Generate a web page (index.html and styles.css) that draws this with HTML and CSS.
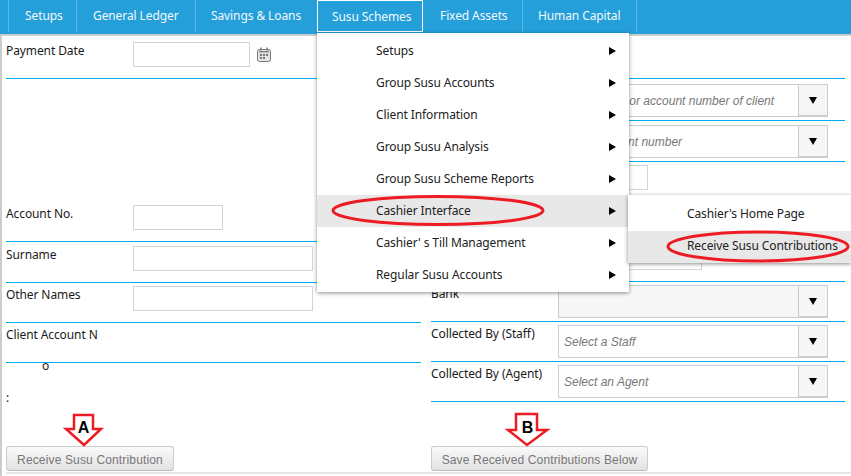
FILE: index.html
```html
<!DOCTYPE html>
<html lang="en">
<head>
    <meta charset="UTF-8">
    <meta name="viewport" content="width=device-width, initial-scale=1.0">
    <title>Receive Susu Contributions</title>
    <link rel="stylesheet" href="styles.css">
</head>
<body>

    <nav class="topnav">
        <a class="tab tab-setups">Setups</a>
        <a class="tab tab-ledger">General Ledger</a>
        <a class="tab tab-savings">Savings &amp; Loans</a>
        <a class="tab active">Susu Schemes</a>
        <a class="tab tab-assets">Fixed Assets</a>
        <a class="tab tab-capital">Human Capital</a>
    </nav>

    <main class="form-area">
        <div class="cols">
            <section class="col col-left">
                <div class="row row-date">
                    <label>Payment Date</label>
                    <input type="text" class="field w-date">
                    <svg class="cal-icon" width="14" height="15" viewBox="0 0 14 15">
                        <rect x="0.5" y="2.5" width="13" height="12" rx="2" fill="#e4e4e4" stroke="#777"/>
                        <rect x="3" y="0.5" width="1.5" height="3" fill="#777"/>
                        <rect x="9.5" y="0.5" width="1.5" height="3" fill="#777"/>
                        <rect x="2" y="4" width="10" height="1.5" fill="#888"/>
                        <path d="M3 7h2v2H3zM6 7h2v2H6zM9 7h2v2H9zM3 10h2v2H3zM6 10h2v2H6z" fill="#777"/>
                    </svg>
                </div>
                <div class="row-blank"></div>
                <div class="row row-account">
                    <label>Account No.</label>
                    <input type="text" class="field w-account">
                </div>
                <div class="row row-surname">
                    <label>Surname</label>
                    <input type="text" class="field w-name">
                </div>
                <div class="row">
                    <label>Other Names</label>
                    <input type="text" class="field w-name">
                </div>
                <div class="row">
                    <label>Client Account N</label>
                </div>
                <div class="wrapped-o">o</div>
                <div class="wrapped-colon">:</div>
                <button class="save-btn btn-a">Receive Susu Contribution</button>
            </section>

            <section class="col col-right">
                <div class="row row-top"></div>
                <div class="row row-r1">
                    <label></label>
                    <div class="combo"><span class="combo-text">Enter name or account number of client</span><span class="combo-btn"></span></div>
                </div>
                <div class="row row-r2">
                    <label></label>
                    <div class="combo"><span class="combo-text">Enter account number</span><span class="combo-btn"></span></div>
                </div>
                <div class="row">
                    <label></label>
                    <input type="text" class="field w-account">
                </div>
                <div class="row"></div>
                <div class="row">
                    <label></label>
                    <input type="text" class="field w-wide">
                </div>
                <div class="row">
                    <label>Bank</label>
                    <div class="combo combo-grey"><span class="combo-text"></span><span class="combo-btn"></span></div>
                </div>
                <div class="row">
                    <label>Collected By (Staff)</label>
                    <div class="combo"><span class="combo-text">Select a Staff</span><span class="combo-btn"></span></div>
                </div>
                <div class="row">
                    <label>Collected By (Agent)</label>
                    <div class="combo"><span class="combo-text">Select an Agent</span><span class="combo-btn"></span></div>
                </div>
                <button class="save-btn btn-b">Save Received Contributions Below</button>
            </section>
        </div>
    </main>

    <ul class="menu">
        <li>Setups</li>
        <li>Group Susu Accounts</li>
        <li>Client Information</li>
        <li>Group Susu Analysis</li>
        <li>Group Susu Scheme Reports</li>
        <li class="hover">Cashier Interface</li>
        <li>Cashier' s Till Management</li>
        <li>Regular Susu Accounts</li>
    </ul>

    <ul class="submenu">
        <li>Cashier's Home Page</li>
        <li class="hover">Receive Susu Contributions</li>
    </ul>

    <!-- red annotations drawn over the screenshot -->
    <svg class="marks" width="851" height="476" viewBox="0 0 851 476">
        <ellipse cx="438" cy="210.5" rx="105" ry="14" fill="none" stroke="#ed1c24" stroke-width="3"/>
        <ellipse cx="758" cy="246.5" rx="90" ry="14.5" fill="none" stroke="#ed1c24" stroke-width="3"/>
        <polygon points="74,415 93,415 93,429 101,429 84,445 66,429 74,429" fill="#fff" stroke="#ed1c24" stroke-width="2.5"/>
        <polygon points="516,414 537,414 537,430 547,430 527,445 508,430 516,430" fill="#fff" stroke="#ed1c24" stroke-width="2.5"/>
        <text class="mark-letter" x="83.5" y="433" text-anchor="middle">A</text>
        <text class="mark-letter" x="527.5" y="433" text-anchor="middle">B</text>
    </svg>

</body>
</html>
```
FILE: styles.css
```css
body {
    margin: 0;
    height: 476px;
    overflow: hidden;
    background-color: #fff;
    font-family: "Noto Sans", "Open Sans", sans-serif;
    font-size: 12px;
    letter-spacing: -0.1px;
    color: #1a1a1a;
}
.topnav {
    display: flex;
    height: 34px;
    padding-left: 8px;
    background-color: #259fda;
    border-bottom: 2px solid #ccc;
}
.tab {
    display: block;
    box-sizing: border-box;
    height: 32px;
    line-height: 31px;
    padding-left: 16px;
    white-space: nowrap;
    color: #f2f8fc;
    border-left: 1px solid #5cb8e4;
}
.tab-setups { width: 68px; }
.tab-ledger { width: 119px; }
.tab-savings { width: 122px; padding-left: 15px; }
.tab-assets { width: 99px; padding-left: 17px; border-left: 0; }
.tab-capital { width: 115px; padding-left: 15px; border-right: 1px solid #5cb8e4; }
.tab.active {
    width: 106px;
    padding-left: 14px;
    border: 1px solid #fff;
}
.form-area {
    height: 440px;
    border-left: 2px solid #ccc;
    padding-left: 4px;
}
.cols {
    display: flex;
    box-sizing: border-box;
    height: 438px;
    border-bottom: 2px solid #e6e6e6;
}
.col {
    display: flex;
    flex-direction: column;
}
.col-left {
    width: 415px;
    margin-right: 10px;
}
.col-right {
    width: 414px;
}
.row {
    display: flex;
    flex-shrink: 0;
    align-items: flex-start;
    box-sizing: border-box;
    height: 40px;
    padding-top: 3px;
    border-bottom: 1px solid #00aeef;
}
.row label {
    width: 127px;
    flex-shrink: 0;
    line-height: 18px;
}
.row-date {
    height: 43px;
    padding-top: 6px;
}
.row-blank {
    flex-shrink: 0;
    height: 122px;
}
.row-account {
    height: 41px;
    padding-top: 4px;
}
.row-surname {
    height: 41px;
    padding-top: 4px;
}
.field {
    box-sizing: border-box;
    height: 25px;
    margin: 0;
    padding: 0 4px;
    border: 1px solid #d4d4d4;
    background-color: #fff;
}
.w-date { width: 117px; }
.w-account { width: 90px; }
.w-name { width: 180px; }
.w-wide { width: 144px; }
.cal-icon {
    margin: 5px 0 0 7px;
}
.wrapped-o {
    padding-left: 36px;
    line-height: 16px;
    margin-top: -5px;
}
.wrapped-colon {
    line-height: 16px;
    margin-top: 16px;
}
.save-btn {
    flex-shrink: 0;
    box-sizing: border-box;
    height: 25px;
    padding: 2px 6px 0;
    border: 1px solid #ccc;
    border-bottom-color: #bbb;
    border-radius: 3px;
    background: linear-gradient(#fafafa, #e2e2e2);
    color: #777;
    font-family: "Liberation Sans", Arial, sans-serif;
    font-size: 12px;
    letter-spacing: 0.15px;
    white-space: nowrap;
    align-self: flex-start;
}
.btn-a {
    width: 168px;
    margin-top: 40px;
}
.btn-b {
    width: 217px;
    margin-top: 44px;
}
.row-top { height: 43px; }
.row-r1 { height: 42px; padding-top: 5px; }
.row-r2 { height: 41px; padding-top: 4px; }
.combo {
    display: flex;
    box-sizing: border-box;
    width: 270px;
    height: 33px;
    border: 1px solid #ccc;
    background-color: #fff;
}
.combo-grey {
    background-color: #f6f6f6;
}
.combo-text {
    flex: 1;
    padding-left: 5px;
    line-height: 33px;
    letter-spacing: 0;
    color: #777;
    font-family: "Liberation Sans", Arial, sans-serif;
    font-style: italic;
}
.combo-btn {
    position: relative;
    box-sizing: border-box;
    width: 29px;
    border-left: 1px solid #ccc;
    border-bottom: 1px solid #ccc;
    background-color: #f6f6f6;
}
.combo-btn::after {
    content: "";
    position: absolute;
    left: 10px;
    top: 12px;
    border-style: solid;
    border-width: 7px 4px 0;
    border-color: #000 transparent transparent;
}
.menu, .submenu {
    position: absolute;
    margin: 0;
    list-style: none;
    background-color: #fff;
    box-shadow: 0 1px 4px rgba(0, 0, 0, 0.45);
    color: #222;
}
.menu {
    left: 317px;
    top: 33px;
    width: 312px;
    height: 259px;
    padding: 2px 0 0;
    box-sizing: border-box;
}
.menu li {
    position: relative;
    height: 32px;
    line-height: 32px;
    padding-left: 59px;
}
.menu li::after {
    content: "";
    position: absolute;
    left: 292px;
    top: 12px;
    border-style: solid;
    border-width: 4px 0 4px 7px;
    border-color: transparent transparent transparent #000;
}
.submenu {
    left: 628px;
    top: 195px;
    width: 223px;
    height: 68px;
    padding: 4px 0 0;
    box-sizing: border-box;
}
.submenu li {
    height: 32px;
    line-height: 30px;
    padding-left: 59px;
}
.hover {
    background-color: #e8e8e8;
}
.marks {
    position: absolute;
    left: 0;
    top: 0;
}
.mark-letter {
    font-family: "Liberation Sans", Arial, sans-serif;
    font-size: 16px;
    font-weight: bold;
    fill: #000;
}
```
